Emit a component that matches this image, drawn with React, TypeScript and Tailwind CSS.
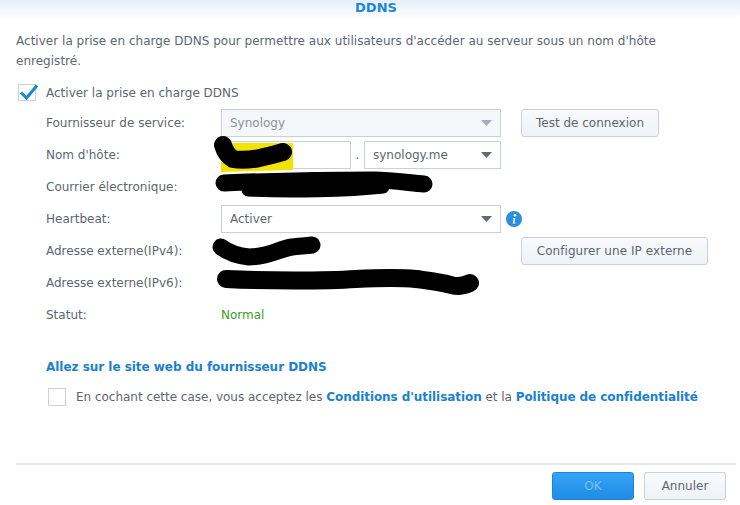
import type { ReactNode } from 'react'

function Caret({ muted }: { muted?: boolean }) {
  return (
    <svg width="11" height="6" viewBox="0 0 11 6" className="shrink-0">
      <path d="M0 0h11L5.5 6z" fill={muted ? '#a3acb8' : '#5f6b7a'} />
    </svg>
  )
}

function Select({ value, className, disabled }: { value: string; className: string; disabled?: boolean }) {
  return (
    <div
      className={`flex h-[28px] items-center justify-between border border-[#c8d0da] pl-[8px] pr-[4px] ${className} ${
        disabled ? 'bg-[#f5f7fa] text-[#8a929c]' : 'bg-white text-[#5d6670]'
      }`}
    >
      <span>{value}</span>
      <span className="mr-[4px]">
        <Caret muted={disabled} />
      </span>
    </div>
  )
}

function Row({ label, children, action }: { label: string; children?: ReactNode; action?: ReactNode }) {
  return (
    <div className="flex h-[28px] items-center">
      <div className="w-[175px] shrink-0">{label}</div>
      <div className="flex w-[280px] shrink-0 items-center">{children}</div>
      {action && <div className="ml-[20px]">{action}</div>}
    </div>
  )
}

function GreyButton({ children, className }: { children: ReactNode; className: string }) {
  return (
    <button className={`h-[28px] rounded-[3px] border border-[#c8d0da] bg-gradient-to-b from-[#f8fafc] to-[#eff3f7] text-[#5d6670] ${className}`}>
      {children}
    </button>
  )
}

export default function App() {
  return (
    <div className="relative flex h-[505px] w-[740px] flex-col overflow-hidden bg-white font-['DejaVu_Sans',Verdana,sans-serif] text-[12px] text-[#5d6670]">
      <header className="flex h-[19px] shrink-0 items-start justify-center bg-gradient-to-b from-[#e4eff9] to-white pl-[12px]">
        <h1 className="text-[13px] leading-[15px] font-bold text-[#1a86d8]">DDNS</h1>
      </header>

      <main className="flex-1 pl-[16px]">
        <p className="mt-[12px] w-[690px] leading-[20px] tracking-[0.02px]">
          Activer la prise en charge DDNS pour permettre aux utilisateurs d'accéder au serveur sous un nom d'hôte
          enregistré.
        </p>

        <label className="mt-[13px] ml-[2px] flex h-[17px] items-center">
          <span className="relative h-[17px] w-[18px] shrink-0 border border-[#ccd3dc] bg-white">
            <svg width="20" height="18" viewBox="0 0 20 18" className="absolute -top-[2px] left-0">
              <path d="M2 9.5 7.5 15 18 2.5" fill="none" stroke="#1a86d8" strokeWidth="3" />
            </svg>
          </span>
          <span className="ml-[10px]">Activer la prise en charge DDNS</span>
        </label>

        <div className="mt-[8px] ml-[30px] flex flex-col gap-[4px]">
          <Row label="Fournisseur de service:" action={<GreyButton className="w-[138px]">Test de connexion</GreyButton>}>
            <Select value="Synology" className="w-[280px]" disabled />
          </Row>
          <Row label="Nom d'hôte:">
            <div className="h-[28px] w-[130px] border border-[#c8d0da]" />
            <span className="w-[13px] text-center">.</span>
            <Select value="synology.me" className="w-[137px]" />
          </Row>
          <Row label="Courrier électronique:" />
          <Row label="Heartbeat:">
            <Select value="Activer" className="w-[280px] shrink-0" />
            <svg width="16" height="16" viewBox="0 0 16 16" className="ml-[5px] shrink-0">
              <circle cx="8" cy="8" r="8" fill="#2a8fe0" />
              <circle cx="9" cy="4.2" r="1.3" fill="#fff" />
              <path d="M7 7h2.4L8.4 11.6H9.6L9.3 12.6H6.6L7.6 8H6.8z" fill="#fff" />
            </svg>
          </Row>
          <Row label="Adresse externe(IPv4):" action={<GreyButton className="w-[187px] tracking-[0.06px]">Configurer une IP externe</GreyButton>} />
          <Row label="Adresse externe(IPv6):" />
          <Row label="Statut:">
            <span className="text-[#3aa01e]">Normal</span>
          </Row>
        </div>

        <div className="mt-[29px] ml-[30px] font-bold tracking-[-0.03px] text-[#1a80d0]">Allez sur le site web du fournisseur DDNS</div>

        <label className="mt-[12px] ml-[32px] flex h-[18px] items-center">
          <span className="h-[18px] w-[18px] shrink-0 border border-[#ccd3dc] bg-white" />
          <span className="ml-[10px] whitespace-nowrap tracking-[-0.02px]">
            En cochant cette case, vous acceptez les{' '}
            <span className="font-bold tracking-[-0.07px] text-[#1a80d0]">Conditions d'utilisation</span> et la{' '}
            <span className="font-bold tracking-[-0.07px] text-[#1a80d0]">Politique de confidentialité</span>
          </span>
        </label>
      </main>

      <footer className="mr-[4px] ml-[16px] flex h-[42px] shrink-0 items-start justify-end gap-[10px] border-t-2 border-[#e6e8ea] pt-[7px] pr-[10px]">
        <button className="h-[28px] w-[82px] rounded-[3px] border border-[#1f84d6] bg-gradient-to-b from-[#35a3f5] to-[#1f8ce6] text-[#7cc0f2]">
          OK
        </button>
        <GreyButton className="w-[82px]">Annuler</GreyButton>
      </footer>

      {/* hand-drawn redactions lying over the form */}
      <svg className="pointer-events-none absolute inset-0" width="740" height="505" viewBox="0 0 740 505">
        <defs>
          <filter id="smudge">
            <feGaussianBlur stdDeviation="3" />
          </filter>
        </defs>
        <path d="M221 143h72v27l-72 2z" fill="#f2e400" />
        <path d="M223 145c2 7 5 11 10 14 16 3 36-3 50-7" fill="none" stroke="#000" strokeWidth="18" strokeLinecap="round" />
        <path d="M424 184h22" fill="none" stroke="#8a8a8a" strokeWidth="10" filter="url(#smudge)" />
        <path d="M224 183c50-2 110-3 150-3 18 0 36 3 50 4" fill="none" stroke="#000" strokeWidth="17" strokeLinecap="round" />
        <path d="M248 190c40 2 100 1 135-3" fill="none" stroke="#000" strokeWidth="13" strokeLinecap="round" />
        <path d="M221 247c8 6 18 9 28 10 20 0 30-8 43-10 8-1 14-1 20-2" fill="none" stroke="#000" strokeWidth="17" strokeLinecap="round" />
        <path d="M226 279c40 2 100 2 130 0 20-1 40-2 60 0 15 2 25 3 35 6 6 2 12 1 19-2" fill="none" stroke="#000" strokeWidth="18" strokeLinecap="round" />
      </svg>
    </div>
  )
}
